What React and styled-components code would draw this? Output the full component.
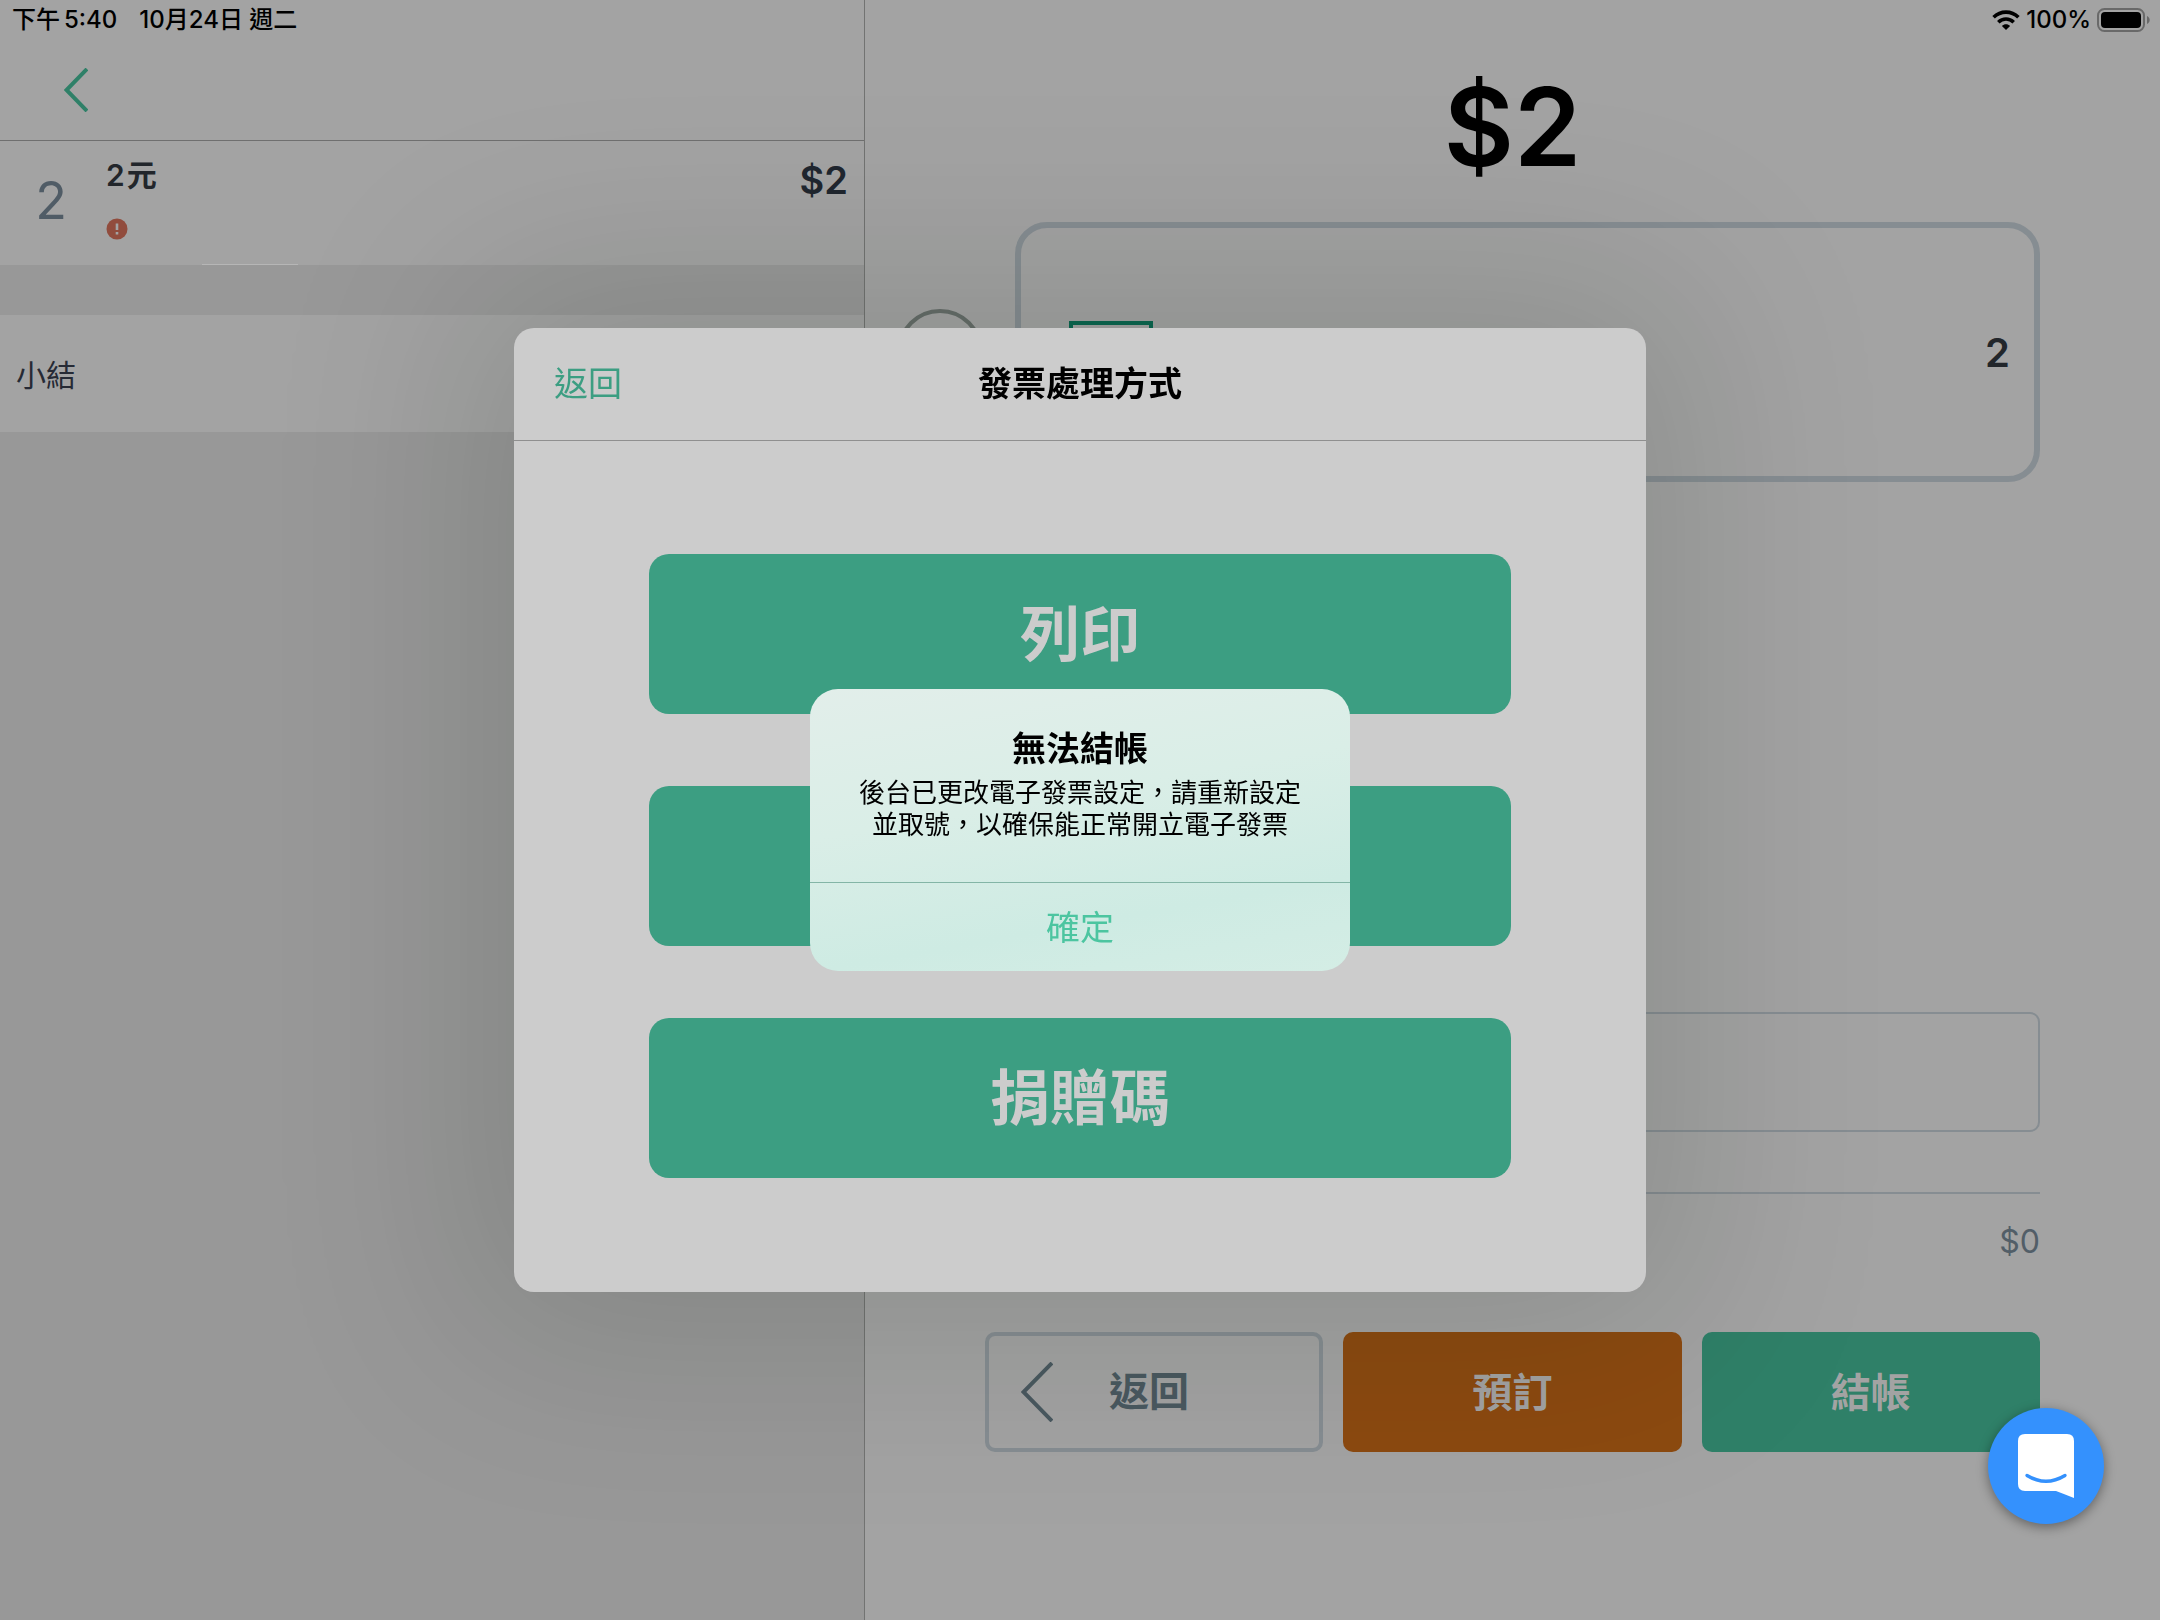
import React, {useState} from "react";
import styled, {createGlobalStyle} from "styled-components";

const GlobalStyle = createGlobalStyle`
    * {
        box-sizing: border-box;
    }
    body {
        margin: 0;
        background: #a3a3a3;
        color: #22262b;
        font-family: Inter, "Noto Sans CJK TC", sans-serif;
    }
    button, input {
        font-family: inherit;
        margin: 0;
    }
    button {
        border: none;
        padding: 0;
        background: none;
        cursor: pointer;
    }
    h1, h2, p {
        margin: 0;
    }
`;

const Screen = styled.div`
    display: grid;
    grid-template-columns: 40% 1fr;
    min-height: 100vh;
`;

const OrderPane = styled.section`
    background: #989898;
`;

const PayPane = styled.main`
    display: flex;
    flex-direction: column;
    border-left: 1px solid #727372;
    padding-bottom: 168px;
    background: #a3a3a3;
`;

const StatusBar = styled.div`
    display: flex;
    align-items: center;
    justify-content: ${(props) => props.$end ? "flex-end" : "flex-start"};
    gap: ${(props) => props.$end ? "6px" : "22px"};
    height: 40px;
    padding: 0 10px 0 12px;
    color: #000;
    background: #a3a3a3;
    font-size: 24px;
    font-weight: 500;
    line-height: 40px;
`;

const Clock = styled.span`
    display: flex;
    gap: 4px;
`;

const OrderNav = styled.header`
    display: flex;
    align-items: center;
    height: 101px;
    padding-left: 64px;
    border-bottom: 1px solid #6f6f6f;
    background: #a3a3a3;
`;

const IconButton = styled.button`
    display: flex;
`;

const ItemRow = styled.div`
    display: flex;
    height: 124px;
    padding: 14px 16px 14px 0;
    background: linear-gradient(#b6b6b6, #b6b6b6) 202px 100% / 96px 1px no-repeat #a3a3a3;
`;

const Quantity = styled.span`
    align-self: center;
    width: 106px;
    padding: 0 4px 4px 0;
    color: #505c66;
    font-size: 52px;
    line-height: 60px;
    text-align: center;
`;

const ItemInfo = styled.div`
    flex: 1;
    display: flex;
    flex-direction: column;
    gap: 23px;
    font-size: 30px;
    font-weight: 600;
    line-height: 40px;
`;

const ItemName = styled.span`
    display: flex;
    gap: 2px;
`;

const Price = styled.span`
    color: #20262f;
    font-size: 38px;
    font-weight: 600;
    line-height: 50px;
`;

const Subtotal = styled.div`
    display: flex;
    align-items: center;
    height: 117px;
    margin-top: 50px;
    padding: 0 16px 2px;
    color: #262a35;
    background: #a3a3a3;
    font-size: 30px;
`;

const Total = styled.h1`
    margin: 31px 0 39px;
    color: #000;
    font-size: 108px;
    font-weight: 600;
    line-height: 112px;
    text-align: center;
`;

const Tender = styled.label`
    display: flex;
    align-items: center;
    gap: 32px;
    padding: 0 120px 0 32px;
`;

const TenderRadio = styled.input`
    appearance: none;
    width: 86px;
    height: 86px;
    border: 4px solid #666d6a;
    border-radius: 50%;
`;

const TenderBox = styled.div`
    flex: 1;
    display: flex;
    align-items: center;
    justify-content: space-between;
    height: 260px;
    padding: 0 24px 0 48px;
    border: 6px solid #868d92;
    border-radius: 32px;
    font-size: 40px;
    font-weight: 600;
`;

const Checkout = styled.div`
    display: flex;
    flex-direction: column;
    margin-top: auto;
    padding: 0 120px;
`;

const NoteInput = styled.input`
    height: 120px;
    padding: 0 24px;
    border: 2px solid #868d92;
    border-radius: 10px;
    background: none;
    font-size: 32px;
`;

const Change = styled.p`
    margin: 60px 0 70px;
    padding-top: 28px;
    border-top: 2px solid #868d92;
    color: #525e68;
    font-size: 32px;
    line-height: 40px;
    text-align: right;
`;

const Actions = styled.div`
    display: grid;
    grid-template-columns: repeat(3, 1fr);
    gap: 20px;
`;

const ActionButton = styled.button`
    height: 120px;
    padding-bottom: 4px;
    border-radius: 10px;
    color: #a3a3a3;
    background: ${(props) => props.$color};
    font-size: 40px;
    font-weight: 600;
`;

const OutlineButton = styled(ActionButton)`
    display: flex;
    align-items: center;
    gap: 56px;
    padding: 0 0 0 32px;
    border: 4px solid #868d92;
    color: #4a5960;
    background: none;
    line-height: 56px;
`;

const Layer = styled.div`
    position: fixed;
    inset: 0;
    display: flex;
    align-items: center;
    justify-content: center;
    padding-top: ${(props) => props.$top || 0}px;
`;

const Modal = styled.div`
    width: 1132px;
    max-width: 94%;
    overflow: hidden;
    border-radius: 20px;
    background: #ccc;
    box-shadow: 0 0 200px 50px rgba(0, 24, 0, 0.13);
`;

const ModalHeader = styled.header`
    display: grid;
    grid-template-columns: 1fr auto 1fr;
    align-items: center;
    height: 113px;
    padding: 0 40px;
    border-bottom: 1px solid #8f8f8f;
`;

const ModalTitle = styled.h2`
    color: #000;
    font-size: 34px;
    font-weight: 600;
    line-height: 44px;
`;

const TextButton = styled.button`
    justify-self: start;
    color: #3c9e82;
    font-size: 34px;
    line-height: 44px;
`;

const Choices = styled.div`
    display: flex;
    flex-direction: column;
    gap: 72px;
    padding: 113px 135px 114px;
`;

const ChoiceButton = styled.button`
    height: 160px;
    padding-bottom: 10px;
    border-radius: 20px;
    color: #ccc;
    background: #3c9e82;
    font-size: 60px;
    font-weight: 600;
`;

const Alert = styled.div`
    width: 540px;
    overflow: hidden;
    border-radius: 28px;
    color: #000;
    background: linear-gradient(170deg, #e2eeea 0%, #daeee7 40%, #ceebe3 75%, #d4ede5 100%);
    text-align: center;
`;

const AlertBody = styled.div`
    height: 193px;
    padding: 38px 40px 0;
`;

const AlertText = styled.p`
    margin-top: 6px;
    font-size: 26px;
    line-height: 32px;
`;

const AlertButton = styled.button`
    width: 100%;
    height: 89px;
    padding-bottom: 4px;
    border-top: 1px solid #83b5a6;
    color: #4cc5a0;
    font-size: 34px;
`;

const ChatButton = styled.button`
    position: fixed;
    right: 56px;
    bottom: 96px;
    display: flex;
    align-items: center;
    justify-content: center;
    width: 116px;
    height: 116px;
    border-radius: 50%;
    background: #3491fd;
    box-shadow: 0 3px 12px rgba(0, 0, 0, 0.4);
`;

function Chevron ({width, height, color}){
    return (
        <svg width={width} height={height} viewBox={`0 0 ${width} ${height}`} fill="none" stroke={color} strokeWidth="4">
            <path d={`M${width - 1} 1L2.5 ${height / 2}L${width - 1} ${height - 1}`} />
        </svg>
    )
}

function WifiIcon (){
    return (
        <svg width="28" height="20" viewBox="0 0 28 20" fill="none" stroke="#000" strokeWidth="3.6">
            <path d="M1.6 7.2C8.6 0.4 19.4 0.4 26.4 7.2" />
            <path d="M6.3 12.2C10.7 8 17.3 8 21.7 12.2" />
            <path d="M14 20L9.9 15.9C12.2 13.7 15.8 13.7 18.1 15.9Z" fill="#000" stroke="none" />
        </svg>
    )
}

function BatteryIcon (){
    return (
        <svg width="53" height="24" viewBox="0 0 53 24">
            <rect x="1" y="1" width="46" height="22" rx="6.5" fill="none" stroke="#696969" strokeWidth="2" />
            <rect x="4" y="4" width="40" height="16" rx="4" fill="#000" />
            <path d="M50 8C53.6 9.4 53.6 14.6 50 16Z" fill="#696969" />
        </svg>
    )
}

function WarningIcon (){
    return (
        <svg width="22" height="22" viewBox="0 0 22 22">
            <circle cx="11" cy="11" r="10.5" fill="#914c3d" />
            <path d="M11 5.5V12M11 14V16.5" stroke="#a3a3a3" strokeWidth="2.6" />
        </svg>
    )
}

function CashIcon (){
    return (
        <svg width="84" height="62" viewBox="0 0 84 62" fill="none" stroke="#0c6650" strokeWidth="4">
            <rect x="2" y="2" width="80" height="58" />
            <circle cx="42" cy="31" r="11" />
        </svg>
    )
}

function ChatIcon (){
    return (
        <svg width="56" height="64" viewBox="0 0 56 64">
            <path d="M7 0H49Q56 0 56 7V64Q46 60 38 57H7Q0 57 0 50V7Q0 0 7 0Z" fill="#fff" />
            <path d="M9 41.5Q28 53 47 41.5" fill="none" stroke="#3491fd" strokeWidth="3.4" strokeLinecap="round" />
        </svg>
    )
}

const choices = ["列印", "載具", "捐贈碼"];

function App (){
    const[showModal, setShowModal] = useState(true);
    const[showAlert, setShowAlert] = useState(true);

    // the alert sits right over the middle choice
    const covered = showAlert ? 1 : -1;

    return (
        <>
            <GlobalStyle />
            <Screen>
                <OrderPane>
                    <StatusBar>
                        <Clock><span>下午</span><span>5:40</span></Clock>
                        <span>10月24日 週二</span>
                    </StatusBar>
                    <OrderNav>
                        <IconButton aria-label="返回"><Chevron width={24} height={44} color="#2f8068" /></IconButton>
                    </OrderNav>
                    <ItemRow>
                        <Quantity>2</Quantity>
                        <ItemInfo>
                            <ItemName><span>2</span><span>元</span></ItemName>
                            <WarningIcon />
                        </ItemInfo>
                        <Price>$2</Price>
                    </ItemRow>
                    <Subtotal>小結</Subtotal>
                </OrderPane>
                <PayPane>
                    <StatusBar $end>
                        <WifiIcon />
                        <span>100%</span>
                        <BatteryIcon />
                    </StatusBar>
                    <Total>$2</Total>
                    <Tender>
                        <TenderRadio type="radio" name="tender" />
                        <TenderBox>
                            <CashIcon />
                            <span>2</span>
                        </TenderBox>
                    </Tender>
                    <Checkout>
                        <NoteInput type="text" aria-label="備註" />
                        <Change>$0</Change>
                        <Actions>
                            <OutlineButton>
                                <Chevron width={32} height={60} color="#4a5960" />
                                <span>返回</span>
                            </OutlineButton>
                            <ActionButton $color="#8c4a10">預訂</ActionButton>
                            <ActionButton $color="#2f8068" onClick={() => {setShowModal(true)}}>結帳</ActionButton>
                        </Actions>
                    </Checkout>
                </PayPane>
            </Screen>
            {showModal && (
                <Layer>
                    <Modal role="dialog" aria-labelledby="invoice-title">
                        <ModalHeader>
                            <TextButton onClick={() => {setShowModal(false)}}>返回</TextButton>
                            <ModalTitle id="invoice-title">發票處理方式</ModalTitle>
                        </ModalHeader>
                        <Choices>
                            {choices.map((choice, i) => (
                                <ChoiceButton key={choice} aria-label={choice} onClick={() => {setShowAlert(true)}}>
                                    {i !== covered && choice}
                                </ChoiceButton>
                            ))}
                        </Choices>
                    </Modal>
                </Layer>
            )}
            {showAlert && (
                <Layer $top={40}>
                    <Alert role="alertdialog" aria-labelledby="alert-title">
                        <AlertBody>
                            <ModalTitle id="alert-title">無法結帳</ModalTitle>
                            <AlertText>後台已更改電子發票設定，請重新設定<br />並取號，以確保能正常開立電子發票</AlertText>
                        </AlertBody>
                        <AlertButton onClick={() => {setShowAlert(false)}}>確定</AlertButton>
                    </Alert>
                </Layer>
            )}
            <ChatButton aria-label="客服"><ChatIcon /></ChatButton>
        </>
    )
}

export default App;
